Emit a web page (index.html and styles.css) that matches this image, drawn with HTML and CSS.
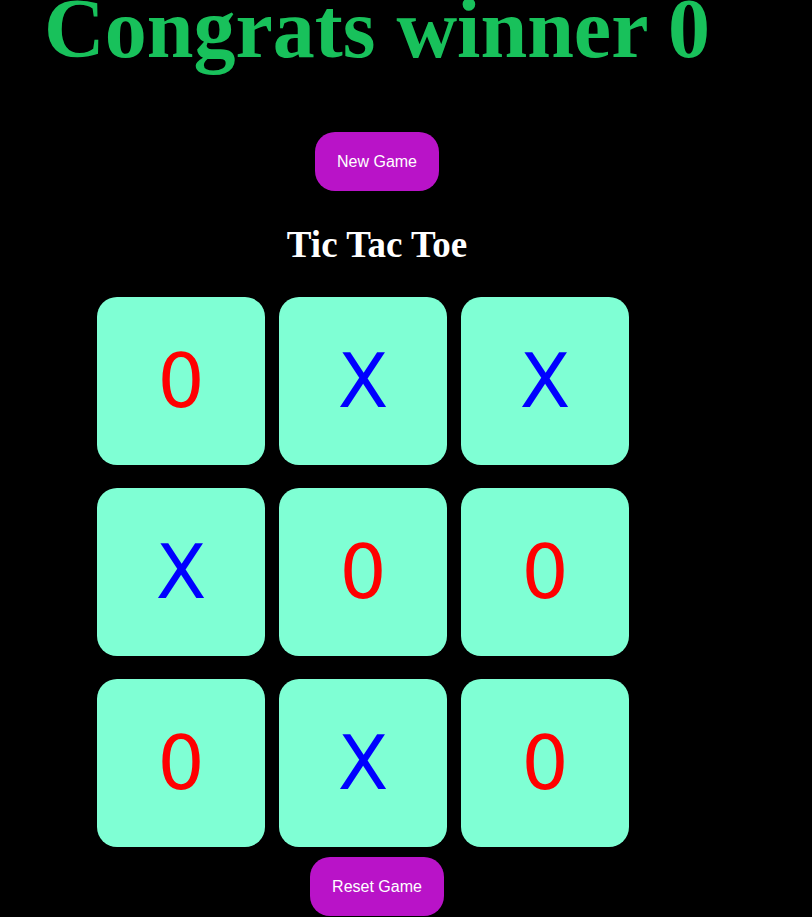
FILE: index.html
```html
<!DOCTYPE html>
<html lang="en">
<head>
<meta charset="utf-8">
<title>Tic Tac Toe</title>
<link rel="stylesheet" href="styles.css">
</head>
<body>
<main class="page">
  <h1 class="msg">Congrats winner 0</h1>
  <button class="btn new-btn">New Game</button>
  <h2 class="title">Tic Tac Toe</h2>
  <div class="game">
    <button class="box o">0</button>
    <button class="box x">X</button>
    <button class="box x">X</button>
    <button class="box x">X</button>
    <button class="box o">0</button>
    <button class="box o">0</button>
    <button class="box o">0</button>
    <button class="box x">X</button>
    <button class="box o">0</button>
  </div>
  <button class="btn reset-btn">Reset Game</button>
</main>
</body>
</html>
```

FILE: styles.css
```css
html, body {
  margin: 0;
  padding: 0;
  background: #000;
  overflow: hidden;
}

.page {
  width: 754px;
  display: flex;
  flex-direction: column;
  align-items: center;
}

.msg {
  margin: -13px 0 0;
  font-family: "Liberation Serif", "Times New Roman", serif;
  font-weight: bold;
  font-size: 84px;
  line-height: 84px;
  color: #18c15b;
  white-space: nowrap;
}

.btn {
  height: 59px;
  padding: 0 22px;
  border: none;
  border-radius: 20px;
  background: #b913c8;
  color: #fff;
  font-family: "Liberation Sans", Arial, sans-serif;
  font-size: 16px;
}

.new-btn {
  margin-top: 61px;
}

.title {
  margin: 33px 0 0;
  font-family: "Liberation Serif", "Times New Roman", serif;
  font-weight: bold;
  font-size: 37px;
  line-height: 42px;
  color: #fff;
}

.game {
  margin: 31px 28px 0 0;
  display: grid;
  grid-template-columns: repeat(3, 168px);
  grid-auto-rows: 168px;
  column-gap: 14px;
  row-gap: 23px;
}

.box {
  border: none;
  border-radius: 20px;
  background: #7fffd4;
  padding: 0;
  display: flex;
  align-items: center;
  justify-content: center;
  font-family: "DejaVu Sans", Verdana, sans-serif;
  font-size: 74px;
  line-height: 1;
}

.box.o {
  color: #ff0000;
}

.box.x {
  color: #0000ff;
}

.reset-btn {
  margin-top: 10px;
}
```
